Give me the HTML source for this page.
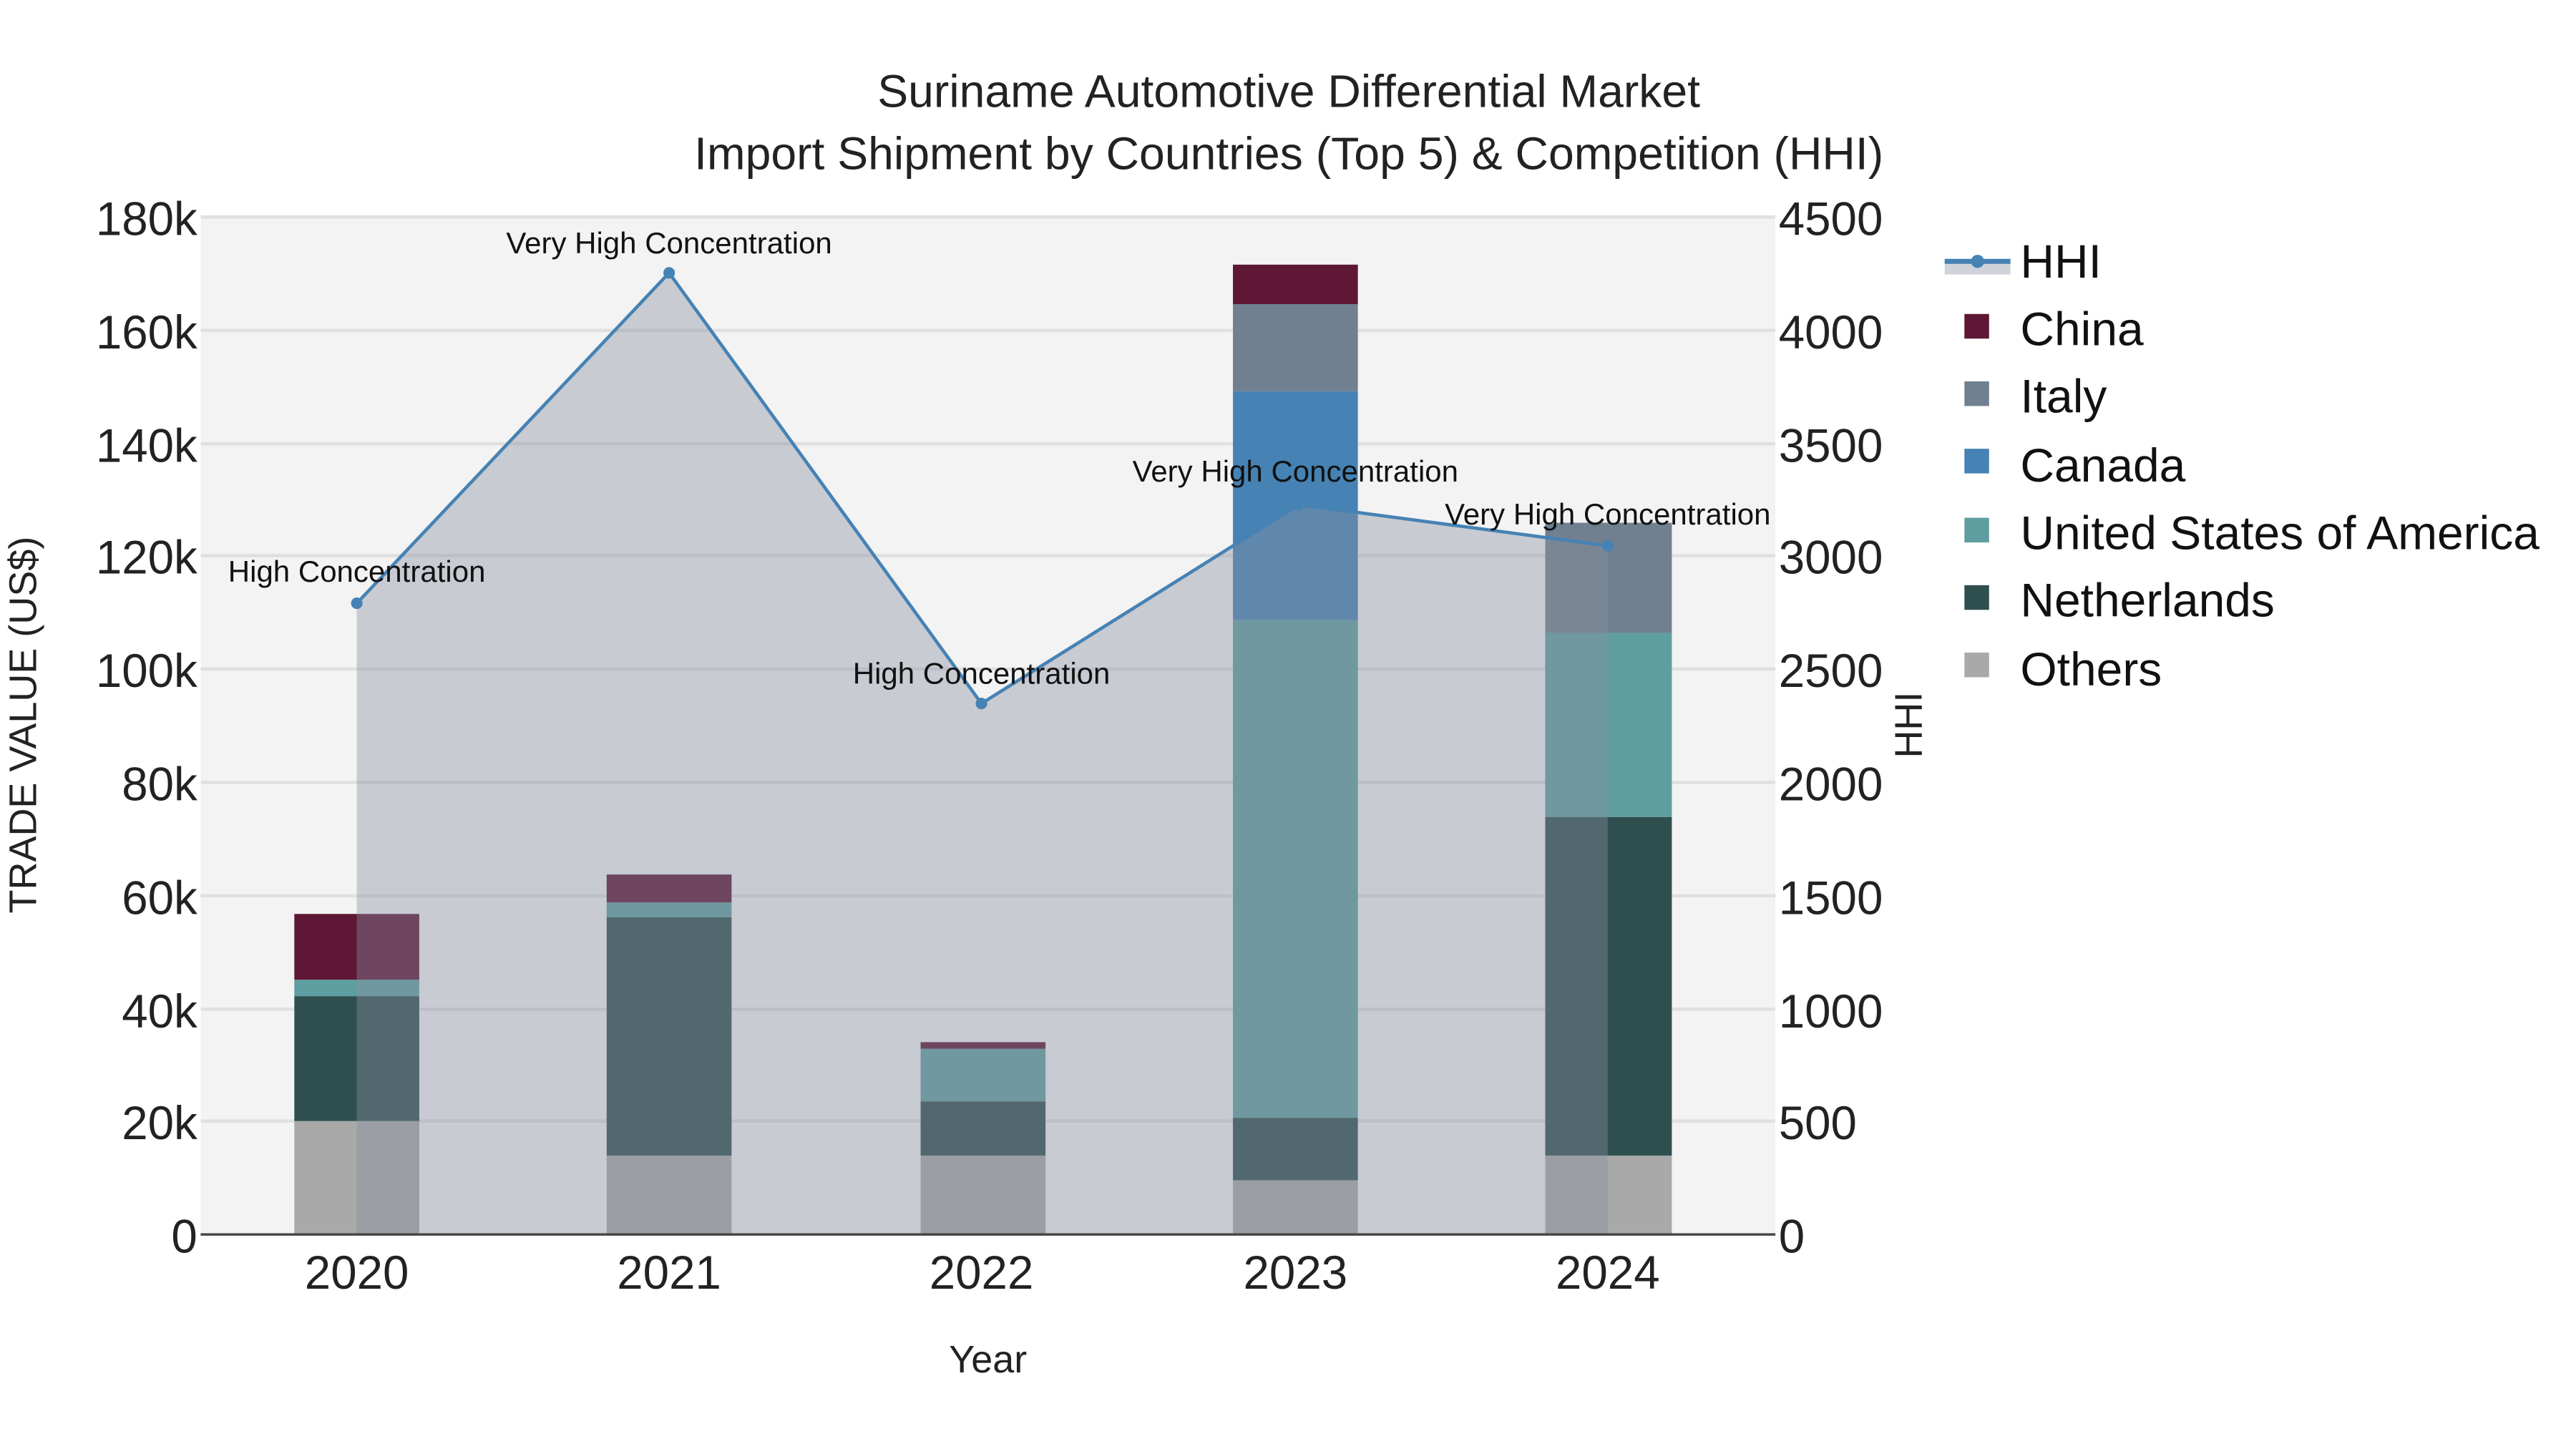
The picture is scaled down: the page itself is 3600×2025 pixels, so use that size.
<!DOCTYPE html>
<html><head><meta charset="utf-8"><style>html,body{margin:0;padding:0;background:#fff}svg{display:block}text{font-family:"Liberation Sans",sans-serif}</style></head>
<body>
<svg width="3600" height="2025" viewBox="0 0 1567 881.5" xmlns="http://www.w3.org/2000/svg">
<rect width="1567" height="881.5" fill="#fff"/>
<text x="784" y="65" font-size="28" text-anchor="middle" fill="#222">Suriname Automotive Differential Market</text>
<text x="784" y="103" font-size="28" text-anchor="middle" fill="#222">Import Shipment by Countries (Top 5) &amp; Competition (HHI)</text>
<rect x="122" y="132" width="958" height="619" fill="#f3f3f3"/>
<g stroke="#e0e0e0" stroke-width="2">
<line x1="122" x2="1080" y1="132" y2="132"/><line x1="122" x2="1080" y1="201" y2="201"/><line x1="122" x2="1080" y1="270" y2="270"/><line x1="122" x2="1080" y1="338" y2="338"/><line x1="122" x2="1080" y1="407" y2="407"/><line x1="122" x2="1080" y1="476" y2="476"/><line x1="122" x2="1080" y1="545" y2="545"/><line x1="122" x2="1080" y1="614" y2="614"/><line x1="122" x2="1080" y1="682" y2="682"/>
</g>
<g>
<rect x="179" y="682" width="76" height="69" fill="#a9a9a9"/><rect x="179" y="606" width="76" height="76" fill="#2f4f4f"/><rect x="179" y="596" width="76" height="10" fill="#5f9ea0"/><rect x="179" y="556" width="76" height="40" fill="#5e1734"/>
<rect x="369" y="703" width="76" height="48" fill="#a9a9a9"/><rect x="369" y="558" width="76" height="145" fill="#2f4f4f"/><rect x="369" y="549" width="76" height="9" fill="#5f9ea0"/><rect x="369" y="532" width="76" height="17" fill="#5e1734"/>
<rect x="560" y="703" width="76" height="48" fill="#a9a9a9"/><rect x="560" y="670" width="76" height="33" fill="#2f4f4f"/><rect x="560" y="638" width="76" height="32" fill="#5f9ea0"/><rect x="560" y="634" width="76" height="4" fill="#5e1734"/>
<rect x="750" y="718" width="76" height="33" fill="#a9a9a9"/><rect x="750" y="680" width="76" height="38" fill="#2f4f4f"/><rect x="750" y="377" width="76" height="303" fill="#5f9ea0"/><rect x="750" y="238" width="76" height="139" fill="#4682b4"/><rect x="750" y="185" width="76" height="53" fill="#708090"/><rect x="750" y="161" width="76" height="24" fill="#5e1734"/>
<rect x="940" y="703" width="77" height="48" fill="#a9a9a9"/><rect x="940" y="497" width="77" height="206" fill="#2f4f4f"/><rect x="940" y="385" width="77" height="112" fill="#5f9ea0"/><rect x="940" y="318" width="77" height="67" fill="#708090"/>
</g>
<polygon points="217,367 407,166 597,428 790,307 978,332 978,751 217,751" fill="rgba(136,143,160,0.4)"/>
<polyline points="217,367 407,166 597,428 790,307 978,332" fill="none" stroke="#4682b4" stroke-width="2"/>
<g fill="#4682b4"><circle cx="217" cy="367" r="3.5"/><circle cx="407" cy="166" r="3.5"/><circle cx="597" cy="428" r="3.5"/><circle cx="790" cy="307" r="3.5"/><circle cx="978" cy="332" r="3.5"/></g>
<line x1="122" x2="1080" y1="751" y2="751" stroke="#444" stroke-width="1.5"/>
<g font-size="18.3" fill="#111" text-anchor="middle">
<text x="217" y="354">High Concentration</text><text x="407" y="154">Very High Concentration</text><text x="597" y="416">High Concentration</text><text x="788" y="293">Very High Concentration</text><text x="978" y="319">Very High Concentration</text>
</g>
<g font-size="28.5" fill="#222" text-anchor="end">
<text x="120" y="143">180k</text><text x="120" y="212">160k</text><text x="120" y="281">140k</text><text x="120" y="349">120k</text><text x="120" y="418">100k</text><text x="120" y="487">80k</text><text x="120" y="556">60k</text><text x="120" y="625">40k</text><text x="120" y="693">20k</text><text x="120" y="762">0</text>
</g>
<g font-size="28.5" fill="#222">
<text x="1082" y="143">4500</text><text x="1082" y="212">4000</text><text x="1082" y="281">3500</text><text x="1082" y="349">3000</text><text x="1082" y="418">2500</text><text x="1082" y="487">2000</text><text x="1082" y="556">1500</text><text x="1082" y="625">1000</text><text x="1082" y="693">500</text><text x="1082" y="762">0</text>
</g>
<g font-size="28.5" fill="#222" text-anchor="middle">
<text x="217" y="784">2020</text><text x="407" y="784">2021</text><text x="597" y="784">2022</text><text x="788" y="784">2023</text><text x="978" y="784">2024</text>
</g>
<text x="601" y="835" font-size="23.5" text-anchor="middle" fill="#222">Year</text>
<text transform="translate(22,441) rotate(-90)" font-size="23.5" text-anchor="middle" fill="#222">TRADE VALUE (US$)</text>
<text transform="translate(1169,441) rotate(-90)" font-size="23.5" text-anchor="middle" fill="#222">HHI</text>
<rect x="1183" y="159" width="40" height="8" fill="#d0d4da"/>
<line x1="1183" x2="1223" y1="159" y2="159" stroke="#4682b4" stroke-width="3"/>
<circle cx="1203" cy="159" r="4" fill="#4682b4"/>
<g font-size="28.7" fill="#111">
<text x="1229" y="169">HHI</text><text x="1229" y="210">China</text><text x="1229" y="251">Italy</text><text x="1229" y="293">Canada</text><text x="1229" y="334">United States of America</text><text x="1229" y="375">Netherlands</text><text x="1229" y="417">Others</text>
</g>
<rect x="1195" y="191" width="15" height="15" fill="#5e1734"/>
<rect x="1195" y="232" width="15" height="15" fill="#708090"/>
<rect x="1195" y="273" width="15" height="15" fill="#4682b4"/>
<rect x="1195" y="315" width="15" height="15" fill="#5f9ea0"/>
<rect x="1195" y="356" width="15" height="15" fill="#2f4f4f"/>
<rect x="1195" y="397" width="15" height="15" fill="#a9a9a9"/>
</svg>
</body></html>
